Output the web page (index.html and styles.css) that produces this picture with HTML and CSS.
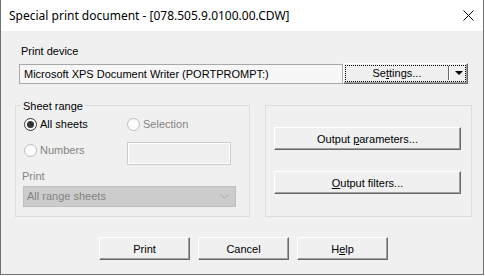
FILE: index.html
```html
<!DOCTYPE html>
<html lang="en">
<head>
  <meta charset="UTF-8">
  <title>Special print document</title>
  <link rel="stylesheet" href="styles.css">
</head>
<body>
  <div class="window">
    <div class="titlebar">
      <span class="title">Special print document - [078.505.9.0100.00.CDW]</span>
      <svg class="close" width="11" height="11" viewBox="0 0 11 11">
        <path d="M0.5 0.5 L10.5 10.5 M10.5 0.5 L0.5 10.5" stroke="#000" stroke-width="1" fill="none"/>
      </svg>
    </div>

    <div class="client">
      <div class="device-label">Print device</div>
      <div class="device-row">
        <div class="field">Microsoft XPS Document Writer (PORTPROMPT:)</div>
        <div class="split-btn">
          <span class="split-main">Se<u>t</u>tings...</span>
          <span class="split-arrow"><span class="tri"></span></span>
        </div>
      </div>

      <div class="groups">
        <div class="group group-range">
          <span class="group-title">Sheet range</span>
          <div class="range-grid">
            <div class="radio checked"><span class="dot"></span>All sheets</div>
            <div class="radio disabled"><span class="dot"></span>Selection</div>
            <div class="radio disabled numbers"><span class="dot"></span>Numbers</div>
            <div class="edit"></div>
          </div>
          <div class="print-label">Print</div>
          <div class="combo">
            <span>All range sheets</span>
            <svg width="9" height="5" viewBox="0 0 9 5">
              <path d="M0.5 0.5 L4.5 4.5 L8.5 0.5" stroke="#a8a8a8" stroke-width="1" fill="none"/>
            </svg>
          </div>
        </div>

        <div class="group group-output">
          <button class="btn wide">Output <u>p</u>arameters...</button>
          <button class="btn wide"><u>O</u>utput filters...</button>
        </div>
      </div>

      <div class="actions">
        <button class="btn">Print</button>
        <button class="btn">Cancel</button>
        <button class="btn">H<u>e</u>lp</button>
      </div>
    </div>
  </div>
</body>
</html>
```

FILE: styles.css
```css
* {
  box-sizing: border-box;
}
body {
  margin: 0;
  background: #ffffff;
  font-family: "Liberation Sans", Arial, sans-serif;
  font-size: 11px;
  color: #000;
}
.window {
  width: 484px;
  height: 275px;
  border: 1px solid #707070;
  border-top: none;
  background: #f0f0f0;
  display: flex;
  flex-direction: column;
}
.titlebar {
  height: 31px;
  background: #fff;
  display: flex;
  align-items: center;
  justify-content: space-between;
  padding: 0 9px 0 8px;
}
.title {
  font-family: "Noto Sans", sans-serif;
  font-size: 12px;
  color: #000;
}
.client {
  padding: 14px 0 0 0;
  line-height: 13px;
}
.device-label {
  margin-left: 20px;
}
.device-row {
  display: flex;
  margin: 5px 0 0 18px;
}
.field {
  width: 324px;
  height: 20px;
  margin-top: 1px;
  border: 1px solid #a8a8a8;
  background: #f7f7f7;
  padding-left: 4px;
  line-height: 18px;
  white-space: nowrap;
}
.split-btn {
  width: 125px;
  height: 21px;
  display: flex;
  border: 1px solid;
  border-color: #fff #696969 #696969 #fff;
  box-shadow: inset -1px -1px 0 #a0a0a0;
  outline: 1px dotted #000;
  outline-offset: -3px;
  background: #f0f0f0;
}
.split-main {
  flex: 1;
  text-align: center;
  border-right: 1px solid #696969;
  margin: 2px 0 3px;
  line-height: 14px;
  padding-left: 2px;
}
.split-arrow {
  width: 18px;
  display: flex;
  align-items: center;
  justify-content: center;
  border-left: 1px solid #fff;
  margin: 2px 0 3px;
}
.tri {
  width: 0;
  height: 0;
  border-left: 4px solid transparent;
  border-right: 4px solid transparent;
  border-top: 4px solid #000;
}
.groups {
  display: flex;
  gap: 15px;
  margin: 21px 0 0 14px;
}
.group {
  position: relative;
  height: 112px;
  border: 1px solid #dcdcdc;
}
.group-range {
  width: 235px;
}
.group-output {
  width: 207px;
  display: flex;
  flex-direction: column;
  padding: 21px 0 0 8px;
  gap: 21px;
}
.group-title {
  position: absolute;
  top: -6px;
  left: 5px;
  padding: 0 2px;
  background: #f0f0f0;
}
.range-grid {
  display: grid;
  grid-template-columns: 103px 104px;
  row-gap: 11px;
  padding: 12px 0 0 8px;
}
.radio {
  display: flex;
  align-items: center;
  gap: 3px;
  height: 13px;
}
.radio.numbers {
  margin-top: 2px;
}
.dot {
  width: 13px;
  height: 13px;
  border-radius: 50%;
  border: 1px solid #333;
  background: #fff;
  position: relative;
}
.checked .dot::after {
  content: "";
  position: absolute;
  inset: 2px;
  border-radius: 50%;
  background: #333;
}
.disabled {
  color: #838383;
}
.disabled .dot {
  border-color: #bcbcbc;
  background: #fcfcfc;
}
.edit {
  height: 23px;
  border: 1px solid #cccccc;
  box-shadow: inset 0 0 0 1px #fff;
  background: #f0f0f0;
}
.print-label {
  margin: 5px 0 0 6px;
  color: #838383;
}
.combo {
  width: 213px;
  height: 21px;
  margin: 3px 0 0 7px;
  border: 1px solid #bfbfbf;
  background: #cccccc;
  color: #838383;
  display: flex;
  align-items: center;
  justify-content: space-between;
  padding: 0 6px 0 3px;
}
.btn {
  height: 23px;
  padding: 0;
  font-family: "Liberation Sans", Arial, sans-serif;
  font-size: 11px;
  color: #000;
  background: #f0f0f0;
  border: 1px solid;
  border-color: #fff #696969 #696969 #fff;
  box-shadow: inset -1px -1px 0 #a0a0a0;
  width: 91px;
}
.btn.wide {
  width: 187px;
}
.actions {
  display: flex;
  gap: 8px;
  margin: 20px 0 0 98px;
}
```
